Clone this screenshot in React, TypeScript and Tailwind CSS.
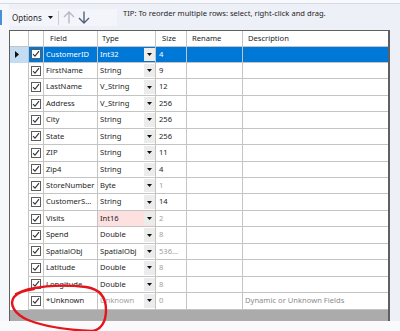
import React from "react";

type Row = {
  f: string;
  t: string;
  s: string;
  sel?: boolean;
  sg?: boolean;
  tg?: boolean;
  pink?: boolean;
  d?: string;
};

const rows: Row[] = [
  { f: "CustomerID", t: "Int32", s: "4", sel: true },
  { f: "FirstName", t: "String", s: "9" },
  { f: "LastName", t: "V_String", s: "12" },
  { f: "Address", t: "V_String", s: "256" },
  { f: "City", t: "String", s: "256" },
  { f: "State", t: "String", s: "256" },
  { f: "ZIP", t: "String", s: "11" },
  { f: "Zip4", t: "String", s: "4" },
  { f: "StoreNumber", t: "Byte", s: "1", sg: true },
  { f: "CustomerS...", t: "String", s: "14" },
  { f: "Visits", t: "Int16", s: "2", sg: true, pink: true },
  { f: "Spend", t: "Double", s: "8", sg: true },
  { f: "SpatialObj", t: "SpatialObj", s: "536...", sg: true },
  { f: "Latitude", t: "Double", s: "8", sg: true },
  { f: "Longitude", t: "Double", s: "8", sg: true },
  { f: "*Unknown", t: "Unknown", s: "0", sg: true, tg: true, d: "Dynamic or Unknown Fields" },
];

const cols = "grid grid-cols-[19px_15px_54px_58px_31px_56px_1fr]";

function Check() {
  return (
    <div className="w-[10px] h-[10px] bg-white border border-[#5c5c5c] flex items-center justify-center">
      <svg width="8" height="8" viewBox="0 0 8 8">
        <path d="M1 4.2 L3 6.2 L7 1.2" fill="none" stroke="#333" strokeWidth="1.1" />
      </svg>
    </div>
  );
}

function DropBtn() {
  return (
    <div className="w-[11px] self-stretch my-[1px] bg-[#ececec] flex items-center justify-center">
      <svg width="5" height="3" viewBox="0 0 5 3">
        <path d="M0 0 L5 0 L2.5 3 Z" fill="#111" />
      </svg>
    </div>
  );
}

export default function App() {
  return (
    <div
      className="relative w-[400px] h-[331px] overflow-hidden bg-[#fafafc] text-[7.6px] text-[#1e1e1e]"
      style={{ fontFamily: '"Noto Sans", "Liberation Sans", sans-serif' }}
    >
      <div className="h-[4px] bg-[#f8f9fc] border-b border-[#d6d9e4]" />
      <div className="flex h-[317px] bg-[#eef0f8]">
        <div className="w-[9px] flex flex-col bg-[#f6f7fb]">
          <div className="mt-[6px] h-[15px] w-[2px] bg-[#4a90d9]" />
        </div>
        <div className="flex-1 flex flex-col">
          <div className="h-[26px] flex items-start">
            <div className="mt-[5px] ml-[-1px] h-[17px] w-[109px] bg-[#f4f5fa] flex items-center">
              <span className="ml-[4px] text-[8px] leading-none">Options</span>
              <svg className="ml-[6px]" width="5" height="3" viewBox="0 0 5 3">
                <path d="M0 0 L5 0 L2.5 3 Z" fill="#111" />
              </svg>
              <div className="ml-[5px] w-[1px] h-[14px] bg-[#c9ccd6]" />
              <svg className="ml-[4px]" width="12" height="13" viewBox="0 0 12 13">
                <path d="M6 12.5 L6 1 M1 6 L6 1 L11 6" fill="none" stroke="#b5b9c6" strokeWidth="1.4" />
              </svg>
              <svg className="ml-[3px]" width="12" height="13" viewBox="0 0 12 13">
                <path d="M6 0.5 L6 12 M1 7 L6 12 L11 7" fill="none" stroke="#53617d" strokeWidth="1.4" />
              </svg>
            </div>
            <div className="ml-[6px] mt-[6px] leading-none">
              TIP: To reorder multiple rows: select, right-click and drag.
            </div>
          </div>
          <div className="w-[381px] flex-1 flex flex-col border-l border-t border-r-2 border-[#5f5f5f] bg-[#ababab]">
            <div className={`${cols} h-[15.5px] bg-white border-b border-[#c4c4c4]`}>
              <div className="border-r border-[#c4c4c4]" />
              <div className="border-r border-[#c4c4c4]" />
              <div className="border-r border-[#c4c4c4] pl-[6px] flex items-center">Field</div>
              <div className="border-r border-[#c4c4c4] pl-[4px] flex items-center">Type</div>
              <div className="border-r border-[#c4c4c4] pl-[6px] flex items-center">Size</div>
              <div className="border-r border-[#c4c4c4] pl-[5px] flex items-center">Rename</div>
              <div className="pl-[5px] flex items-center">Description</div>
            </div>
            {rows.map((r, i) => {
              const cellBg = r.sel ? "bg-[#0078d7] text-white" : "bg-white";
              return (
                <div key={i} className={`${cols} h-[16.45px]`}>
                  <div
                    className={`border-r border-[#c4c4c4] flex items-center pl-[5px] ${
                      r.sel ? "bg-[#c3dcf2]" : "bg-white"
                    }`}
                  >
                    {r.sel && (
                      <svg width="4" height="7" viewBox="0 0 4 7">
                        <path d="M0 0 L4 3.5 L0 7 Z" fill="#111" />
                      </svg>
                    )}
                  </div>
                  <div className={`border-r border-b border-[#c4c4c4] flex items-center justify-center ${cellBg}`}>
                    <Check />
                  </div>
                  <div className={`border-r border-b border-[#c4c4c4] flex items-center pl-[2px] whitespace-nowrap overflow-hidden ${cellBg}`}>
                    {r.f}
                  </div>
                  <div
                    className={`border-r border-b border-[#c4c4c4] flex items-stretch ${
                      r.sel ? "bg-[#0078d7] text-white" : r.pink ? "bg-[#fde1e1]" : "bg-white"
                    }`}
                  >
                    <div className={`flex-1 flex items-center pl-[2px] whitespace-nowrap overflow-hidden ${r.tg ? "text-[#a0a0a0]" : ""}`}>
                      {r.t}
                    </div>
                    <DropBtn />
                  </div>
                  <div
                    className={`border-r border-b border-[#c4c4c4] flex items-center pl-[3px] whitespace-nowrap ${cellBg} ${
                      r.sg && !r.sel ? "text-[#a0a0a0]" : ""
                    }`}
                  >
                    {r.s}
                  </div>
                  <div className={`border-r border-b border-[#c4c4c4] ${cellBg}`} />
                  <div className={`border-b border-[#c4c4c4] flex items-center pl-[2px] text-[#8c8c8c] whitespace-nowrap ${cellBg}`}>
                    {r.d ?? ""}
                  </div>
                </div>
              );
            })}
            <div className="flex-1" />
          </div>
        </div>
      </div>
      <svg className="absolute left-0 top-0 pointer-events-none" width="400" height="331" viewBox="0 0 400 331">
        <path
          d="M16 294 C 30 286, 60 284, 86 287 C 100 289, 106 298, 106 310 C 106 322, 101 330, 92 331 M 92 331 C 70 330, 45 327, 28 320 C 14 314, 9 304, 14 297 C 18 292, 26 290, 34 289"
          fill="none"
          stroke="#e4141b"
          strokeWidth="2.4"
          strokeLinecap="round"
        />
      </svg>
    </div>
  );
}
